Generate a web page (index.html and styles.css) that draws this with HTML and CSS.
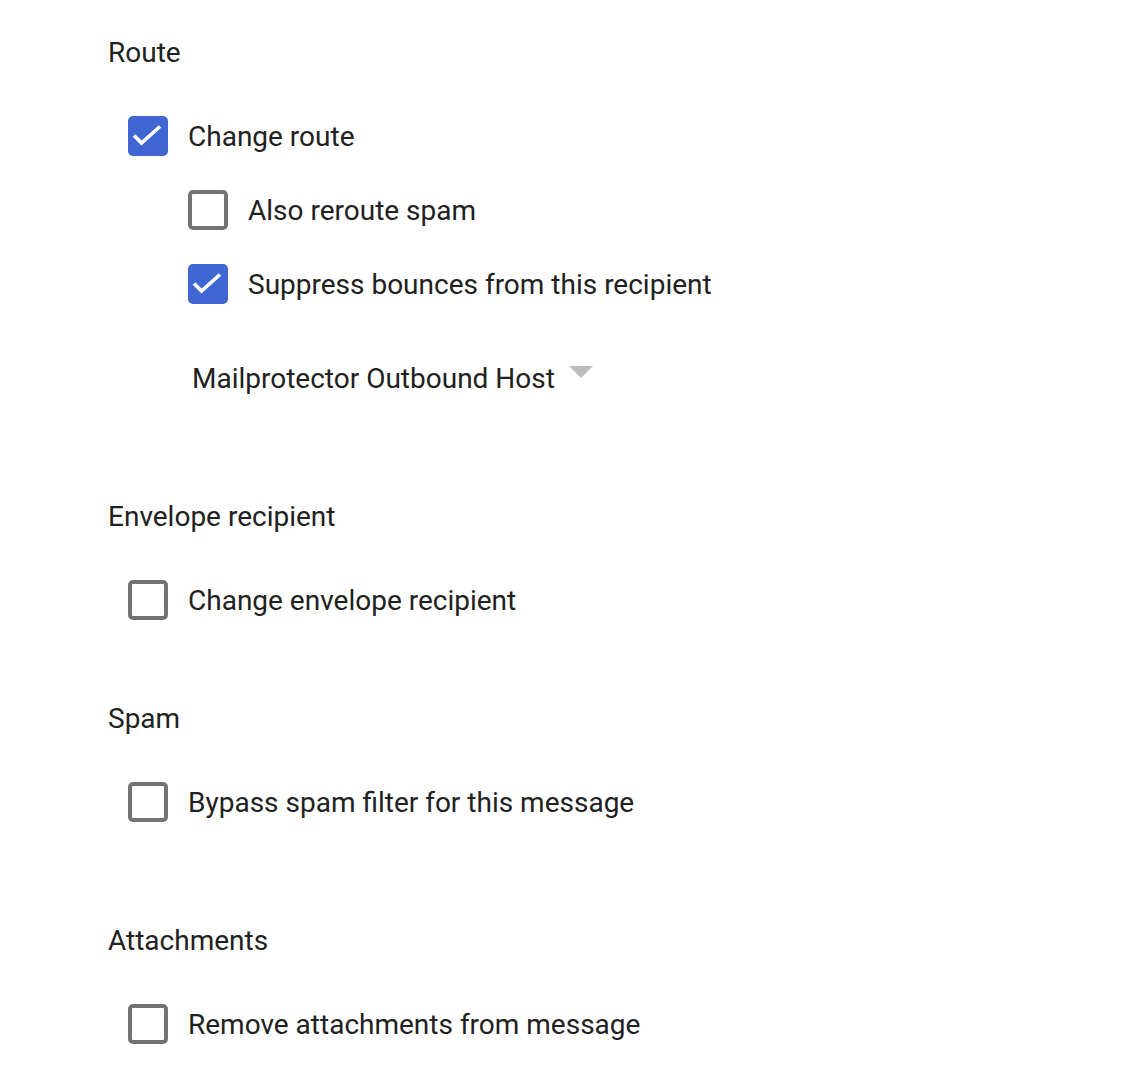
FILE: index.html
```html
<!DOCTYPE html>
<html>
<head>
<meta charset="utf-8">
<link rel="stylesheet" href="styles.css">
</head>
<body>
<div class="page">
  <section class="section s-route">
    <div class="heading">Route</div>
    <div class="rows">
      <label class="row">
        <span class="box checked"><svg viewBox="0 0 40 40"><path d="M6 19.5 L13.5 27 L32 10.5"/></svg></span>
        <span class="text">Change route</span>
      </label>
      <div class="nested">
        <label class="row">
          <span class="box"></span>
          <span class="text">Also reroute spam</span>
        </label>
        <label class="row">
          <span class="box checked"><svg viewBox="0 0 40 40"><path d="M6 19.5 L13.5 27 L32 10.5"/></svg></span>
          <span class="text">Suppress bounces from this recipient</span>
        </label>
        <div class="select">
          <span class="text">Mailprotector Outbound Host</span>
          <span class="arrow"></span>
        </div>
      </div>
    </div>
  </section>

  <section class="section s-envelope">
    <div class="heading">Envelope recipient</div>
    <div class="rows">
      <label class="row">
        <span class="box"></span>
        <span class="text">Change envelope recipient</span>
      </label>
    </div>
  </section>

  <section class="section s-spam">
    <div class="heading">Spam</div>
    <div class="rows">
      <label class="row">
        <span class="box"></span>
        <span class="text">Bypass spam filter for this message</span>
      </label>
    </div>
  </section>

  <section class="section s-attach">
    <div class="heading">Attachments</div>
    <div class="rows">
      <label class="row">
        <span class="box"></span>
        <span class="text">Remove attachments from message</span>
      </label>
    </div>
  </section>
</div>
</body>
</html>
```

FILE: styles.css
```css
html, body {
  margin: 0;
  padding: 0;
  background: #ffffff;
}

body {
  font-family: Roboto, "Liberation Sans", sans-serif;
  font-size: 28px;
  color: #212121;
}

.page {
  padding: 36px 0 0 108px;
  display: flex;
  flex-direction: column;
}

.heading {
  line-height: 32px;
  height: 32px;
  padding-top: 1px;
  box-sizing: border-box;
}

.rows {
  margin-top: 48px;
  margin-left: 20px;
  display: flex;
  flex-direction: column;
  gap: 34px;
}

.nested {
  margin-left: 60px;
  display: flex;
  flex-direction: column;
  gap: 34px;
}

.row {
  display: flex;
  align-items: center;
  gap: 20px;
  height: 40px;
}

.text {
  line-height: 32px;
  padding-top: 2px;
  white-space: nowrap;
}

.box {
  box-sizing: border-box;
  width: 40px;
  height: 40px;
  flex: none;
  border: 4px solid #737373;
  border-radius: 5px;
  background: #fff;
  display: flex;
}

.box.checked {
  border: none;
  background: #4066d4;
}

.box svg {
  width: 40px;
  height: 40px;
}

.box svg path {
  fill: none;
  stroke: #ffffff;
  stroke-width: 3.6;
}

.select {
  margin-top: 24px;
  margin-left: 4px;
  display: flex;
  align-items: flex-start;
  gap: 14px;
  height: 32px;
}

.select .text {
  padding-top: 1px;
}

.arrow {
  margin-top: 4px;
  width: 0;
  height: 0;
  border-left: 12px solid transparent;
  border-right: 12px solid transparent;
  border-top: 12px solid #bdbdbd;
}

.s-envelope { margin-top: 106px; }
.s-spam { margin-top: 82px; }
.s-attach { margin-top: 102px; }
```
